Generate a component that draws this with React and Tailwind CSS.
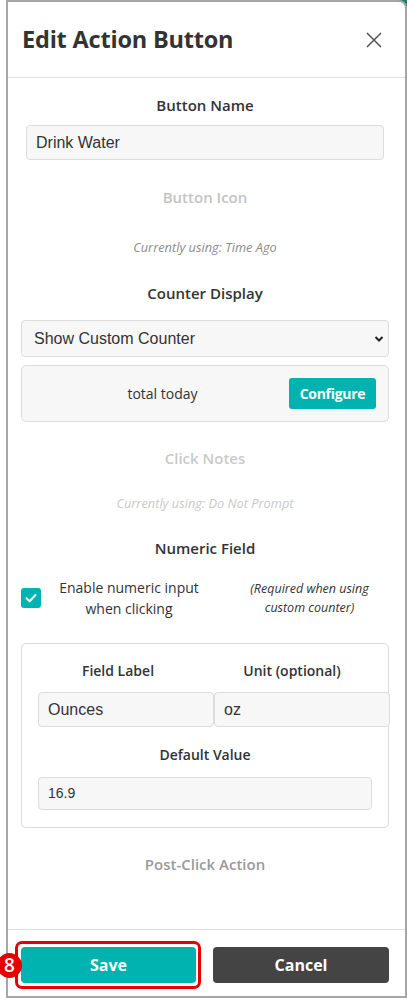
import React from 'react';

const label = "font-['Open_Sans',sans-serif] font-semibold text-[15px] text-[#333] text-center";

function Field({ value, className }) {
  return (
    <div
      className={`flex items-center bg-[#f7f7f7] border border-[#dcdcdc] rounded-[4px] font-['Liberation_Sans',Arial,sans-serif] text-[#333] ${className}`}
    >
      {value}
    </div>
  );
}

export default function App() {
  return (
    <div className="relative w-[407px] h-[998px] bg-white pl-[6px] overflow-hidden">
      {/* teal corner peeking behind the modal */}
      <div className="absolute top-0 right-0 w-[8px] h-[8px] bg-[#1f7a6a]" />

      <div className="relative h-full flex flex-col bg-white border-2 border-[#a6a6a6] rounded-tr-[8px]">
        {/* Header */}
        <div className="h-[76px] shrink-0 flex items-center justify-between pl-[14px] pr-[22px] border-b border-[#dedede]">
          <h1 className="font-['Open_Sans',sans-serif] font-bold text-[23.5px] text-[#333] tracking-[-0.2px]">
            Edit Action Button
          </h1>
          <svg width="18" height="18" viewBox="0 0 18 18" className="text-[#555]">
            <path d="M2 2 L16 16 M16 2 L2 16" stroke="currentColor" strokeWidth="1.5" fill="none" />
          </svg>
        </div>

        {/* Body */}
        <div className="flex-1 flex flex-col pl-[13px] pr-[16px] overflow-hidden">
          <div className={`${label} h-[20px] leading-[20px] mt-[17px]`}>Button Name</div>
          <Field value="Drink Water" className="mt-[10px] h-[35px] mx-[5px] px-[9px] text-[16px]" />

          <div className={`${label} h-[20px] leading-[20px] mt-[27px] !text-[#c4c4c4]`}>Button Icon</div>
          <div className="mt-[32px] h-[16px] leading-[16px] text-center italic text-[12.8px] text-[#8c8c8c] font-['Open_Sans',sans-serif]">
            Currently using: Time Ago
          </div>

          <div className={`${label} h-[20px] leading-[20px] mt-[28px]`}>Counter Display</div>
          <div className="relative mt-[17px]">
            <Field value="Show Custom Counter" className="h-[37px] px-[12px] text-[16px]" />
            <svg width="12" height="12" viewBox="0 0 12 12" className="absolute right-[4px] top-[13px]">
              <path d="M2.5 4 L6 7.5 L9.5 4" stroke="#222" strokeWidth="2" fill="none" />
            </svg>
          </div>
          <div className="mt-[8px] h-[57px] flex items-center bg-[#f7f7f7] border border-[#dcdcdc] rounded-[5px] pr-[12px]">
            <div className="flex-1 text-center pl-[14px] font-['Open_Sans',sans-serif] text-[14px] text-[#333]">total today</div>
            <button className="w-[87px] h-[31px] rounded-[3px] bg-[#00b3b0] text-white font-['Open_Sans',sans-serif] font-bold text-[14px] tracking-[-0.3px]">
              Configure
            </button>
          </div>

          <div className={`${label} h-[20px] leading-[20px] mt-[26px] !text-[#cacaca]`}>Click Notes</div>
          <div className="mt-[27px] h-[16px] leading-[16px] text-center italic text-[12.8px] text-[#c9c9c9] font-['Open_Sans',sans-serif]">
            Currently using: Do Not Prompt
          </div>

          <div className={`${label} h-[20px] leading-[20px] mt-[27px]`}>Numeric Field</div>
          <div className="mt-[19px] h-[42px] flex items-center">
            <div className="w-[20px] h-[20px] rounded-[3px] bg-[#00b3b0] flex items-center justify-center shrink-0">
              <svg width="14" height="14" viewBox="0 0 14 14">
                <path d="M2.5 7.2 L5.6 10.2 L11.5 4" stroke="white" strokeWidth="2" fill="none" strokeLinecap="round" strokeLinejoin="round" />
              </svg>
            </div>
            <div className="ml-[7px] w-[162px] text-center font-['Open_Sans',sans-serif] text-[14px] leading-[21px] text-[#333]">
              Enable numeric input<br />when clicking
            </div>
            <div className="ml-[20px] flex-1 text-center italic font-['Open_Sans',sans-serif] text-[12.5px] leading-[19px] text-[#333]">
              (Required when using<br />custom counter)
            </div>
          </div>

          <div className="mt-[24px] h-[185px] border border-[#dcdcdc] rounded-[5px] px-[16px] pt-[17px]">
            <div className="grid grid-cols-[160px_160px] gap-x-[14px]">
              <div className={`${label} !text-[14px] h-[20px] leading-[20px]`}>Field Label</div>
              <div className={`${label} !text-[14px] h-[20px] leading-[20px]`}>Unit (optional)</div>
            </div>
            <div className="flex mt-[11px]">
              <Field value="Ounces" className="w-[176px] shrink-0 h-[35px] px-[9px] text-[16px]" />
              <Field value="oz" className="w-[176px] shrink-0 h-[35px] px-[9px] text-[16px]" />
            </div>
            <div className={`${label} !text-[14px] h-[20px] leading-[20px] mt-[18px]`}>Default Value</div>
            <Field value="16.9" className="mt-[12px] h-[33px] px-[9px] text-[14px]" />
          </div>

          <div className={`${label} h-[20px] leading-[20px] mt-[26px] !text-[#9a9a9a]`}>Post-Click Action</div>
        </div>

        {/* Footer */}
        <div className="h-[67px] shrink-0 border-t border-[#dedede] flex pl-[13px] pr-[14px] pt-[17px] gap-[17px]">
          <button className="relative w-[175px] h-[36px] rounded-[4px] bg-[#00b3b0] text-white font-['Open_Sans',sans-serif] font-bold text-[16px]">
            Save
            <span className="absolute -left-[6px] -top-[6px] -right-[5px] -bottom-[6px] border-[3px] border-[#e60000] rounded-[7px]" />
            <span className="absolute -left-[24px] top-[6px] w-[25px] h-[25px] rounded-full bg-[#e60000] text-white text-[19px] leading-[25px] font-semibold text-center font-['Open_Sans',sans-serif]">
              8
            </span>
          </button>
          <button className="w-[176px] h-[36px] rounded-[4px] bg-[#444] text-white font-['Open_Sans',sans-serif] font-bold text-[16px]">
            Cancel
          </button>
        </div>
      </div>
    </div>
  );
}
